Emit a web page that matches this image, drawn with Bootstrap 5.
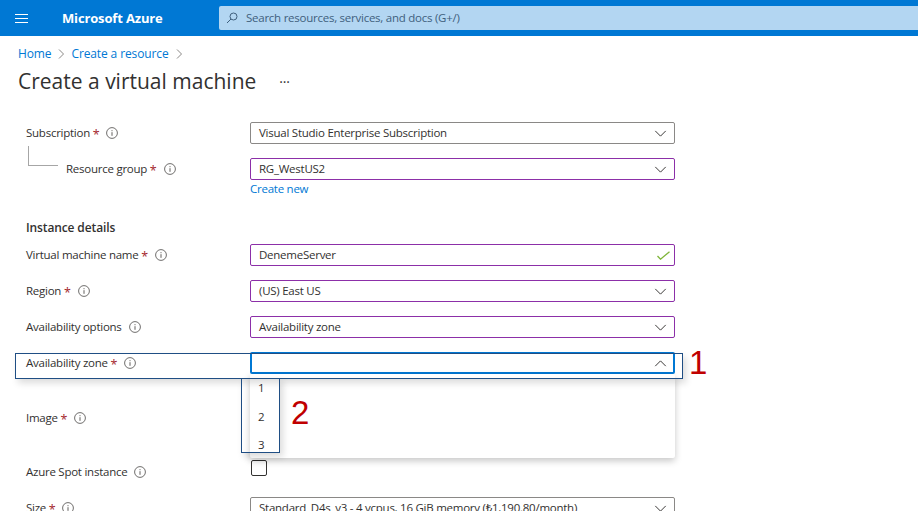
<!DOCTYPE html>
<html lang="en">
<head>
<meta charset="utf-8">
<title>Create a virtual machine</title>
<link href="https://cdn.jsdelivr.net/npm/bootstrap@5.3.0/dist/css/bootstrap.min.css" rel="stylesheet">
<style>
html,body{height:511px;overflow:hidden;background:#fff}
body{font-family:"Open Sans","Noto Sans",sans-serif;font-size:11.5px;color:#323130;letter-spacing:-.25px}
.az-top{height:36px;background:#0078d4;padding:0}
.az-burger{width:14px;margin-left:15px;margin-right:33px;color:#fff}
.az-brand{color:#fff;font-size:13px;font-weight:700;width:157px;letter-spacing:-.15px;line-height:36px;white-space:nowrap}
.az-search{flex:1;height:24px;background:#b3d6f2;border-radius:2px 0 0 2px;padding-left:7px;color:#3f5f7d}
.az-crumb{padding:9px 0 0 18px;height:31px;color:#0078d4;font-size:12px;letter-spacing:-.12px;gap:7px}
.az-crumb a{color:#0078d4;text-decoration:none}
.az-title{font-size:21px;font-weight:500;font-family:"Open Sans",sans-serif;padding-left:18px;line-height:28px;margin:0;color:#323130;letter-spacing:0}
.az-more{margin-left:23px;font-size:14px;line-height:14px;font-weight:400;margin-top:2px}
.az-form{padding:27px 0 0 26px}
.az-row{height:22px;margin-bottom:14px}
.az-lab{width:224px;flex:none;white-space:nowrap}
.az-lab.az-sub{padding-left:40px}
.az-req{color:#a4262c;font-size:12.5px;padding-top:3px;line-height:14px}
.az-info{width:12px;height:12px;margin-left:7px;flex:none}
.az-box{width:425px;height:22px;flex:none;border:1px solid #8a8886;border-radius:2px;padding:0 8px;background:#fff}
.az-purple{border-color:#8c2fa8}
.az-chev{width:13px;height:7px;margin-left:auto;margin-right:-1px;color:#323130}
.az-tick{width:13px;height:9px;margin-left:auto;margin-right:-4px}
.az-link{color:#0078d4;text-decoration:none}
.az-new{margin:-13px 0 0 224px;line-height:16px;height:16px}
.az-head{font-weight:600;line-height:16px;margin-top:23px;margin-bottom:8px;font-size:12px;letter-spacing:-.12px}
.az-active{border:2px solid #0078d4}
.az-active .az-chev{margin-right:-2px}
.az-tree{position:absolute;left:28px;top:146px;width:30px;height:20px;border-left:1px solid #a6a6a6;border-bottom:1px solid #a6a6a6}
.az-imgrow{height:60px}
.az-spot{height:16px;margin:12px 0 21px 0}
.az-spot .az-lab{margin-top:3px}
.az-check{width:16px;height:16px;border:1px solid #323130;border-radius:2px;margin-left:1px;flex:none}
.az-drop{position:absolute;left:250px;top:374px;width:425px;height:84px;background:#fff;border-radius:2px;box-shadow:0 3px 7px rgba(0,0,0,.22);padding-left:8px;z-index:2}
.az-opt{height:28.5px;line-height:28px}
.az-mark{position:absolute;border:1px solid #1f4e84;box-shadow:3px 4px 7px rgba(0,0,0,.14);z-index:3;pointer-events:none}
.az-mark1{left:15px;top:353px;width:668px;height:26px}
.az-mark2{left:241px;top:378px;width:39px;height:75px}
.az-num{position:absolute;color:#c00000;font-family:"Liberation Sans",sans-serif;font-size:33px;line-height:33px;z-index:4;letter-spacing:0}
.az-num1{left:689px;top:346px}
.az-num2{left:291px;top:396px}
.az-page{position:relative;height:511px;overflow:hidden}
</style>
</head>
<body>
<div class="az-page">
<nav class="navbar az-top d-flex flex-nowrap align-items-center justify-content-start">
  <svg class="az-burger" viewBox="0 0 14 9" height="9" aria-hidden="true"><path d="M0 .5h13M0 4.5h13M0 8.5h13" stroke="currentColor" fill="none"/></svg>
  <span class="az-brand">Microsoft Azure</span>
  <div class="az-search d-flex align-items-center gap-2">
    <svg width="12" height="12" viewBox="0 0 12 12" aria-hidden="true"><circle cx="7.5" cy="4.5" r="3.5" fill="none" stroke="#3f5f7d"/><path d="M5 7L1 11" stroke="#3f5f7d" fill="none"/></svg>
    <span>Search resources, services, and docs (G+/)</span>
  </div>
</nav>
<div class="az-crumb d-flex align-items-start">
  <a href="#">Home</a>
  <svg class="mt-1" width="6" height="10" viewBox="0 0 6 10" aria-hidden="true"><path d="M1 .5l4.5 4.5L1 9.5" fill="none" stroke="#8a8886"/></svg>
  <a href="#">Create a resource</a>
  <svg class="mt-1" width="6" height="10" viewBox="0 0 6 10" aria-hidden="true"><path d="M1 .5l4.5 4.5L1 9.5" fill="none" stroke="#8a8886"/></svg>
</div>
<div class="d-flex align-items-center">
  <h1 class="az-title">Create a virtual machine</h1>
  <span class="az-more">···</span>
</div>
<div class="az-form">
  <div class="az-row d-flex align-items-center">
    <div class="az-lab d-flex align-items-center">Subscription&nbsp;<span class="az-req">*</span><svg class="az-info" viewBox="0 0 12 12"><use href="#az-i"/></svg></div>
    <div class="az-box d-flex align-items-center">Visual Studio Enterprise Subscription<svg class="az-chev" viewBox="0 0 14 8"><use href="#az-c"/></svg></div>
  </div>
  <div class="az-row d-flex align-items-center">
    <div class="az-lab az-sub d-flex align-items-center">Resource group&nbsp;<span class="az-req">*</span><svg class="az-info" viewBox="0 0 12 12"><use href="#az-i"/></svg></div>
    <div class="az-box az-purple d-flex align-items-center">RG_WestUS2<svg class="az-chev" viewBox="0 0 14 8"><use href="#az-c"/></svg></div>
  </div>
  <div class="az-new"><a class="az-link" href="#">Create new</a></div>
  <div class="az-head">Instance details</div>
  <div class="az-row d-flex align-items-center">
    <div class="az-lab d-flex align-items-center">Virtual machine name&nbsp;<span class="az-req">*</span><svg class="az-info" viewBox="0 0 12 12"><use href="#az-i"/></svg></div>
    <div class="az-box az-purple d-flex align-items-center">DenemeServer<svg class="az-tick" viewBox="0 0 13 9"><path d="M.5 5l3 3.2L12.5.7" fill="none" stroke="#7fb539" stroke-width="1.3"/></svg></div>
  </div>
  <div class="az-row d-flex align-items-center">
    <div class="az-lab d-flex align-items-center">Region&nbsp;<span class="az-req">*</span><svg class="az-info" viewBox="0 0 12 12"><use href="#az-i"/></svg></div>
    <div class="az-box az-purple d-flex align-items-center">(US) East US<svg class="az-chev" viewBox="0 0 14 8"><use href="#az-c"/></svg></div>
  </div>
  <div class="az-row d-flex align-items-center">
    <div class="az-lab d-flex align-items-center">Availability options<svg class="az-info" viewBox="0 0 12 12"><use href="#az-i"/></svg></div>
    <div class="az-box az-purple d-flex align-items-center">Availability zone<svg class="az-chev" viewBox="0 0 14 8"><use href="#az-c"/></svg></div>
  </div>
  <div class="az-row d-flex align-items-center">
    <div class="az-lab d-flex align-items-center">Availability zone&nbsp;<span class="az-req">*</span><svg class="az-info" viewBox="0 0 12 12"><use href="#az-i"/></svg></div>
    <div class="az-box az-active d-flex align-items-center"><svg class="az-chev" viewBox="0 0 14 8"><path d="M1 7l6-6 6 6" fill="none" stroke="currentColor" stroke-width="1.1"/></svg></div>
  </div>
  <div class="az-imgrow d-flex align-items-center">
    <div class="az-lab d-flex align-items-center">Image&nbsp;<span class="az-req">*</span><svg class="az-info" viewBox="0 0 12 12"><use href="#az-i"/></svg></div>
  </div>
  <div class="az-spot d-flex align-items-start">
    <div class="az-lab d-flex align-items-center">Azure Spot instance<svg class="az-info" viewBox="0 0 12 12"><use href="#az-i"/></svg></div>
    <div class="az-check"></div>
  </div>
  <div class="az-row d-flex align-items-center">
    <div class="az-lab d-flex align-items-center">Size&nbsp;<span class="az-req">*</span><svg class="az-info" viewBox="0 0 12 12"><use href="#az-i"/></svg></div>
    <div class="az-box d-flex align-items-center">Standard_D4s_v3 - 4 vcpus, 16 GiB memory (₺1,190.80/month)<svg class="az-chev" viewBox="0 0 14 8"><use href="#az-c"/></svg></div>
  </div>
</div>
<div class="az-tree"></div>
<div class="az-drop"><div class="az-opt">1</div><div class="az-opt">2</div><div class="az-opt">3</div></div>
<div class="az-mark az-mark1"></div>
<div class="az-mark az-mark2"></div>
<div class="az-num az-num1">1</div>
<div class="az-num az-num2">2</div>
</div>
<svg width="0" height="0" class="d-block" aria-hidden="true">
  <symbol id="az-i" viewBox="0 0 12 12"><circle cx="6" cy="6" r="5.4" fill="none" stroke="#605e5c" stroke-width=".9"/><path d="M6 5.2v3.6M6 3.2v1" stroke="#605e5c" fill="none"/></symbol>
  <symbol id="az-c" viewBox="0 0 14 8"><path d="M1 1l6 6 6-6" fill="none" stroke="#323130" stroke-width="1.1"/></symbol>
</svg>
<script src="https://cdn.jsdelivr.net/npm/bootstrap@5.3.0/dist/js/bootstrap.bundle.min.js"></script>
</body>
</html>
